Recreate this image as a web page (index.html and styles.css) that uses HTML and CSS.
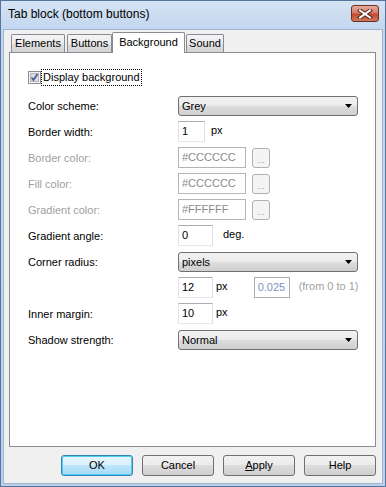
FILE: index.html
```html
<!DOCTYPE html>
<html lang="en">
<head>
    <meta charset="UTF-8">
    <title>Tab block (bottom buttons)</title>
    <link rel="stylesheet" href="styles.css">
</head>
<body>
    <div class="window">
        <div class="titlebar">
            <span class="title">Tab block (bottom buttons)</span>
            <div class="close">
                <svg width="16" height="10" viewBox="0 0 16 10">
                    <path d="M3 1.5 L13 8.5 M13 1.5 L3 8.5" stroke="#5b2a22" stroke-width="4" stroke-linecap="square"/>
                    <path d="M3 1.5 L13 8.5 M13 1.5 L3 8.5" stroke="#fff" stroke-width="2" stroke-linecap="square"/>
                </svg>
            </div>
        </div>
        <div class="client">
            <div class="tabs">
                <div class="tab tab-elements">Elements</div>
                <div class="tab tab-buttons">Buttons</div>
                <div class="tab tab-background selected">Background</div>
                <div class="tab tab-sound">Sound</div>
            </div>
            <div class="panel">
                <div class="check-row">
                    <svg class="checkbox" width="13" height="13" viewBox="0 0 13 13">
                        <rect x="0.5" y="0.5" width="12" height="12" fill="#f3f3f3" stroke="#8e8f8f"/>
                        <rect x="2.5" y="2.5" width="8" height="8" fill="#d9dce2" stroke="#b3b8c0"/>
                        <path d="M3.5 6.5 L5.5 9 L9.5 3" stroke="#4c5e90" stroke-width="1.7" fill="none"/>
                    </svg>
                    <span class="focus">Display background</span>
                </div>
                <div class="form">
                    <div class="label">Color scheme:</div>
                    <div class="ctrl">
                        <div class="select"><span>Grey</span><svg width="7" height="4"><polygon points="0,0 7,0 3.5,4" fill="#000"/></svg></div>
                    </div>

                    <div class="label">Border width:</div>
                    <div class="ctrl">
                        <div class="field w27">1</div><span class="unit u-bw">px</span>
                    </div>

                    <div class="label disabled">Border color:</div>
                    <div class="ctrl">
                        <div class="field off w68">#CCCCCC</div><div class="dots">...</div>
                    </div>

                    <div class="label disabled">Fill color:</div>
                    <div class="ctrl">
                        <div class="field off w68">#CCCCCC</div><div class="dots">...</div>
                    </div>

                    <div class="label disabled">Gradient color:</div>
                    <div class="ctrl">
                        <div class="field off w68">#FFFFFF</div><div class="dots">...</div>
                    </div>

                    <div class="label">Gradient angle:</div>
                    <div class="ctrl">
                        <div class="field w35">0</div><span class="unit u-deg">deg.</span>
                    </div>

                    <div class="label">Corner radius:</div>
                    <div class="ctrl">
                        <div class="select"><span>pixels</span><svg width="7" height="4"><polygon points="0,0 7,0 3.5,4" fill="#000"/></svg></div>
                    </div>

                    <div class="label"></div>
                    <div class="ctrl">
                        <div class="field w35">12</div><span class="unit u-px">px</span>
                        <div class="field ratio">0.025</div><span class="hint">(from 0 to 1)</span>
                    </div>

                    <div class="label">Inner margin:</div>
                    <div class="ctrl">
                        <div class="field w35">10</div><span class="unit u-px">px</span>
                    </div>

                    <div class="label">Shadow strength:</div>
                    <div class="ctrl">
                        <div class="select"><span>Normal</span><svg width="7" height="4"><polygon points="0,0 7,0 3.5,4" fill="#000"/></svg></div>
                    </div>
                </div>
            </div>
            <div class="buttons">
                <div class="btn default">OK</div>
                <div class="btn">Cancel</div>
                <div class="btn"><u>A</u>pply</div>
                <div class="btn">Help</div>
            </div>
        </div>
    </div>
</body>
</html>
```
FILE: styles.css
```css
body {
    margin: 0;
    font-family: "Liberation Sans", Arial, sans-serif;
    font-size: 11px;
    color: #000;
}
.window {
    width: 386px;
    height: 487px;
    box-sizing: border-box;
    border: 1px solid #56759c;
    padding: 0 3px 3px;
    background: linear-gradient(#d5e3f4, #c2d6ee 30px, #bcd2ec);
    display: flex;
    flex-direction: column;
}
.titlebar {
    height: 29px;
    flex-shrink: 0;
    display: flex;
    align-items: flex-start;
    justify-content: space-between;
}
.title {
    font-size: 12px;
    line-height: 14px;
    padding: 6px 0 0 4px;
}
.close {
    width: 28px;
    height: 17px;
    margin: 4px 3px 0 0;
    box-sizing: border-box;
    border: 1px solid #6e2f25;
    border-radius: 3px;
    background: linear-gradient(#e6ab9e, #d57b68 45%, #c2492f 55%, #d0785d);
    display: flex;
    align-items: center;
    justify-content: center;
}
.client {
    flex: 1;
    box-sizing: border-box;
    background: #f0f0f0;
    box-shadow: 0 0 0 1px #9fb5d1;
    padding: 2px 6px 7px 5px;
    display: flex;
    flex-direction: column;
}
.tabs {
    height: 21px;
    margin-bottom: -1px;
    display: flex;
    align-items: flex-end;
    position: relative;
    z-index: 1;
}
.tab {
    box-sizing: border-box;
    height: 18px;
    margin-bottom: 1px;
    border: 1px solid #898c95;
    border-bottom: none;
    border-radius: 2px 2px 0 0;
    background: linear-gradient(#f4f4f4, #ececec 50%, #e0e0e0 50%, #d4d4d4);
    text-align: center;
    line-height: 17px;
}
.tab-elements { width: 54px; margin-left: 2px; }
.tab-buttons { width: 45px; margin-left: 2px; }
.tab-background { width: 73px; }
.tab-sound { width: 38px; margin-left: 1px; }
.tab.selected {
    height: 21px;
    margin-bottom: 0;
    background: #fff;
    line-height: 19px;
}
.panel {
    flex: 1;
    box-sizing: border-box;
    border: 1px solid #898c95;
    background: #fff;
    padding: 16px 0 0 18px;
}
.check-row {
    height: 17px;
    display: flex;
    align-items: center;
}
.checkbox {
    margin-right: 1px;
}
.focus {
    outline: 1px dotted #000;
    outline-offset: 0;
    padding: 0 1px;
    line-height: 15px;
}
.form {
    margin-top: 9px;
    display: grid;
    grid-template-columns: 150px auto;
    grid-auto-rows: 21px;
    row-gap: 5px;
}
.label {
    display: flex;
    align-items: center;
}
.label.disabled {
    color: #a0a0a0;
}
.ctrl {
    display: flex;
    align-items: center;
}
.select {
    box-sizing: border-box;
    width: 180px;
    height: 20px;
    border: 1px solid #707070;
    border-radius: 3px;
    background: linear-gradient(#f2f2f2, #ebebeb 50%, #dddddd 50%, #cfcfcf);
    padding: 0 5px 0 3px;
    display: flex;
    align-items: center;
    justify-content: space-between;
}
.field {
    box-sizing: border-box;
    height: 21px;
    border: 1px solid;
    border-color: #abadb3 #dbdfe6 #e3e9ef #e2e3ea;
    background: #fff;
    padding-left: 3px;
    line-height: 19px;
}
.field.off {
    border-color: #b5b5b5;
    color: #8a8a8a;
}
.w27 { width: 27px; }
.w35 { width: 35px; }
.w68 { width: 68px; }
.field.ratio {
    width: 36px;
    margin-left: 26px;
    border-color: #adadad;
    color: #7895c0;
}
.unit {
    padding-bottom: 3px;
}
.u-bw { margin-left: 6px; }
.u-deg { margin-left: 10px; }
.u-px { margin-left: 3px; }
.hint {
    margin-left: 9px;
    color: #a0a0a0;
    padding-bottom: 3px;
}
.dots {
    box-sizing: border-box;
    width: 18px;
    height: 20px;
    margin-left: 6px;
    border: 1px solid #adb2b5;
    border-radius: 3px;
    background: #f4f4f4;
    color: #a3a3a3;
    font-size: 9px;
    text-align: center;
    line-height: 22px;
}
.buttons {
    margin-top: 8px;
    display: flex;
    justify-content: flex-end;
    gap: 9px;
}
.btn {
    box-sizing: border-box;
    width: 72px;
    height: 21px;
    border: 1px solid #707070;
    border-radius: 3px;
    background: linear-gradient(#f2f2f2, #ebebeb 50%, #dddddd 50%, #cfcfcf);
    text-align: center;
    line-height: 19px;
}
.btn.default {
    border-color: #3c7fb1;
    background: linear-gradient(#eaf6fd, #d9f0fc 50%, #bee6fd 50%, #a7d9f5);
    box-shadow: inset 0 0 0 1px #48d0f6;
}
```
